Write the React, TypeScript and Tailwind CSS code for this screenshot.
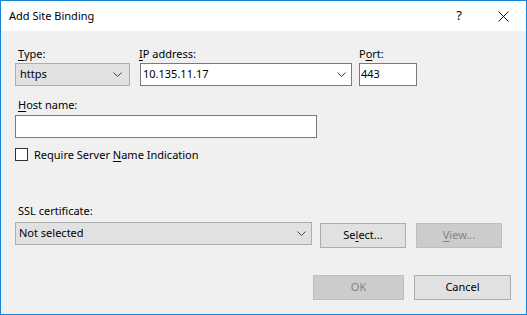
const font = "font-['Noto_Sans','Liberation_Sans',sans-serif]";

const Chevron = () => (
  <svg width="9" height="5" viewBox="0 0 9 5" className="shrink-0">
    <path d="M0.5 0.5 L4.5 4.5 L8.5 0.5" fill="none" stroke="#444" strokeWidth="1" />
  </svg>
);

const Label = ({ children, className = "" }: { children: React.ReactNode; className?: string }) => (
  <div className={`h-[16px] leading-[16px] text-[11px] text-black ${className}`}>{children}</div>
);

const U = ({ children }: { children: React.ReactNode }) => (
  <span className="underline decoration-1 underline-offset-2">{children}</span>
);

const Btn = ({ children, disabled = false, className = "" }: { children: React.ReactNode; disabled?: boolean; className?: string }) => (
  <div
    className={`h-[25px] flex items-center justify-center text-[11px] border ${
      disabled ? "bg-[#cccccc] border-[#bfbfbf] text-[#838383]" : "bg-[#e1e1e1] border-[#adadad] text-black"
    } ${className}`}
  >
    {children}
  </div>
);

export default function App() {
  return (
    <div className={`w-[527px] h-[315px] border border-[#1883d7] flex flex-col ${font}`}>
      <div className="h-[30px] bg-white flex items-center shrink-0">
        <span className="ml-[8px] text-[11px] text-black">Add Site Binding</span>
        <span className="ml-auto mr-[36px] text-[13px] text-black">?</span>
        <svg width="11" height="11" viewBox="0 0 11 11" className="mr-[17px]">
          <path d="M0.5 0.5 L10.5 10.5 M10.5 0.5 L0.5 10.5" stroke="#111" strokeWidth="1" />
        </svg>
      </div>
      <div className="flex-1 bg-[#f0f0f0] pl-[14px] pt-[15px] flex flex-col">
        <div className="flex">
          <div className="w-[115px] flex flex-col">
            <Label className="pl-[3px]"><U>T</U>ype:</Label>
            <div className="mt-[1px] h-[23px] bg-[#e1e1e1] border border-[#adadad] flex items-center pl-[4px] pr-[7px] text-[11px]">
              <span className="flex-1">https</span>
              <Chevron />
            </div>
          </div>
          <div className="w-[212px] ml-[10px] flex flex-col">
            <Label className="-ml-[1px]"><U>I</U>P address:</Label>
            <div className="mt-[1px] h-[23px] bg-white border border-[#7a7a7a] flex items-center pl-[2px] pr-[5px] text-[11px]">
              <span className="flex-1">10.135.11.17</span>
              <Chevron />
            </div>
          </div>
          <div className="w-[58px] ml-[7px] flex flex-col">
            <Label>P<U>o</U>rt:</Label>
            <div className="mt-[1px] h-[23px] bg-white border border-[#7a7a7a] flex items-center pl-[1px] text-[11px]">
              443
            </div>
          </div>
        </div>
        <Label className="mt-[11px] pl-[3px]"><U>H</U>ost name:</Label>
        <div className="mt-[2px] w-[302px] h-[23px] bg-white border border-[#7a7a7a]" />
        <div className="mt-[10px] flex items-center h-[13px]">
          <div className="w-[13px] h-[13px] bg-white border border-[#333333]" />
          <span className="ml-[6px] text-[11px] leading-[16px] text-black">
            Require Server <U>N</U>ame Indication
          </span>
        </div>
        <Label className="mt-[42px] pl-[3px]">SSL certif<U>i</U>cate:</Label>
        <div className="mt-[3px] flex items-start">
          <div className="w-[297px] h-[23px] bg-[#e1e1e1] border border-[#adadad] flex items-center pl-[3px] pr-[5px] text-[11px]">
            <span className="flex-1">Not selected</span>
            <Chevron />
          </div>
          <Btn className="w-[86px] ml-[8px] mt-[1px]">Se<U>l</U>ect...</Btn>
          <Btn disabled className="w-[86px] ml-[10px] mt-[1px]"><U>V</U>iew...</Btn>
        </div>
        <div className="mt-[27px] flex justify-end pr-[15px]">
          <Btn disabled className="w-[91px]">OK</Btn>
          <Btn className="w-[97px] ml-[10px]">Cancel</Btn>
        </div>
      </div>
    </div>
  );
}
